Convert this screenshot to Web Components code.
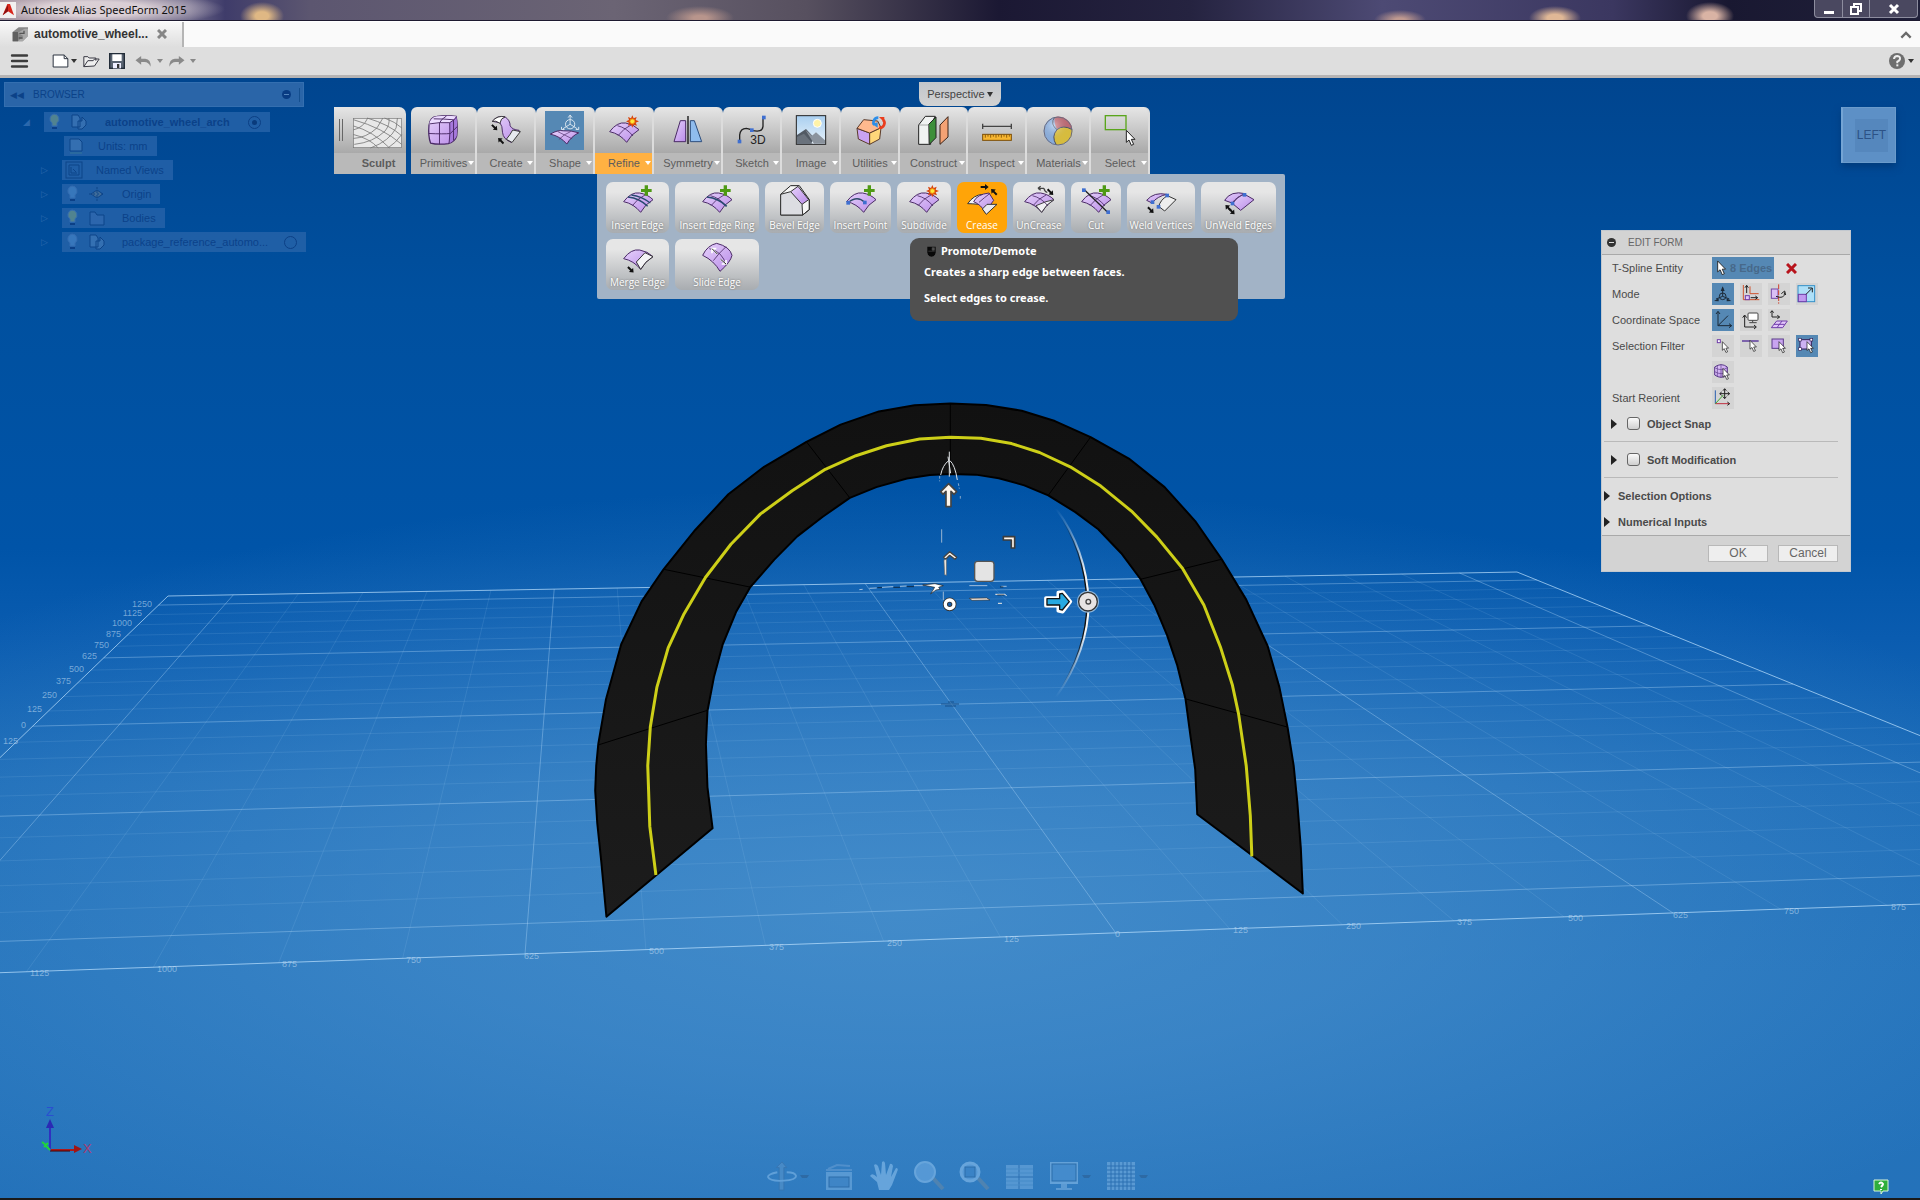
<!DOCTYPE html>
<html lang="en">
<head>
<meta charset="utf-8">
<title>Autodesk Alias SpeedForm 2015</title>
<style>
html,body{margin:0;height:100%;overflow:hidden}
body{font-family:"Liberation Sans",Arial,sans-serif;font-size:11px;line-height:16px;color:#4a4a4a}
</style>
</head>
<body>
<sf-app></sf-app>
<script>
/* ---------- icon library: 90-unit square unless a view box is given ---------- */
const P='fill="url(#pu)" stroke="#4a2a66" stroke-width="3" stroke-linejoin="round"';
const K='fill="none" stroke="#4a2a66" stroke-width="2.5"';
const surf=`<path d="M2 50Q24 20 50 24Q74 28 90 44Q66 58 53 82Q32 56 2 50Z" ${P}/>`;
const cross=`<path d="M25 32Q52 38 72 63M27 62Q44 40 66 30" ${K}/>`;
const plus='<path d="M65 1h10v11h11v9H75v11H65V21H54v-9h11z" fill="#4f9a14"/>';
const star='<path d="M70 0l4 9 9-4-3 9 10 4-10 4 4 9-10-3-4 9-4-9-9 3 3-9-9-4 9-4-3-9 9 4z" fill="#d8440c"/><circle cx="70" cy="18" r="7" fill="#ffe83a" stroke="#f59a12" stroke-width="3"/>';
const dot=(x,y)=>`<rect x="${x-6}" y="${y-6}" width="11" height="11" fill="#3f6fd0"/>`;
const arrow=(x,y,r)=>`<path transform="translate(${x} ${y}) rotate(${r})" d="M-13 -3h13v-6l11 9-11 9v-6h-13z" fill="#111"/>`;
const cursor=(x,y,s=1)=>`<path transform="translate(${x} ${y}) scale(${s})" d="M0 0v36l8-7 7 16 7-3-7-15h11z" fill="#fff" stroke="#222" stroke-width="3" stroke-linejoin="round"/>`;
const bulb=c=>`<path d="M7 2a5 5 0 0 1 3 9v3H5v-3a5 5 0 0 1 2-9z" fill="${c}" stroke="#3a70b4"/><path d="M5 16h5" stroke="#0d3f86" stroke-width="2"/>`;
const ICONS={
sculpt:['0 0 147 91','<rect x="1" y="1" width="145" height="89" fill="#e8e8e8" stroke="#777" stroke-width="2"/><path d="M0 24Q60 40 110 91M0 50Q50 62 76 91M0 5Q90 30 147 80M42 0Q110 20 147 54M95 0Q128 12 147 30M3 80Q60 74 96 40Q112 20 108 0M0 62Q40 60 72 30L90 0M0 36Q30 30 44 0M52 91Q110 70 130 30L134 0M105 91Q130 75 147 50" fill="none" stroke="#777" stroke-width="2.5"/>'],
primitives:['0 0 94 94','<path d="M3 32Q6 6 28 4Q60 0 88 4Q94 30 90 66Q84 84 64 90Q30 94 8 88Q0 66 3 32Z" fill="url(#pu)" stroke="#4a2a66" stroke-width="4"/><path d="M3 30Q8 6 28 4Q60 0 88 4Q86 12 68 24Q30 26 3 30Z" fill="#ecdcff"/><path d="M68 24Q84 14 89 5Q93 30 90 66Q80 84 66 89Z" fill="#a679dc"/><path d="M4 28Q36 22 68 24Q84 16 89 6M68 24Q70 60 66 90M36 25V92M2 58Q50 60 70 58L92 36M36 25Q40 14 58 3M18 12Q50 12 80 15V80" fill="none" stroke="#4a2a66" stroke-width="3"/>'],
create:['0 0 94 94','<path d="M4 20Q20 0 44 6Q60 16 60 34Q66 46 88 48L64 86Q38 76 36 54Q36 34 28 24Z" fill="url(#pu)" stroke="#4a2a66" stroke-width="3"/><path d="M4 20Q20 0 44 6Q30 10 28 26Q14 16 4 20Z" fill="#fff" stroke="#333" stroke-width="3"/><path d="M68 47L92 52L66 86L48 76Q60 62 68 47Z" fill="#e6e9ef" stroke="#333" stroke-width="3"/>'+arrow(12,40,45)+arrow(30,80,225)],
shape:['0 0 118 118','<rect width="118" height="118" fill="#5588b4"/><g transform="translate(12 22)"><path d="M4 48Q28 34 44 38Q66 36 90 44Q68 54 54 78Q34 54 4 48Z" fill="url(#pu)" stroke="#4a2a66" stroke-width="3"/><path d="M26 40Q50 52 70 62M30 64Q46 48 66 40" fill="none" stroke="#4a2a66" stroke-width="2"/></g><g fill="none" stroke="#d8e4ee" stroke-width="3"><circle cx="76" cy="40" r="14"/><path d="M76 40V14M70 20l6-8 6 8M76 40L54 54M76 40L98 54M50 48v8h9M93 56h9v-8"/></g>'],
refine:[,surf+cross+'<g transform="translate(0 1)">'+star+'</g>'],
symmetry:[,'<path d="M22 17H38V80H3Z" fill="url(#pu)" stroke="#4a2a66" stroke-width="3"/><path d="M52 17H64L86 80H52Z" fill="#8fbcee" stroke="#2c4d7c" stroke-width="3"/><path d="M45 3V87" stroke="#111" stroke-width="4"/>'],
sketch:[,'<path d="M8 78V60Q10 40 28 40Q38 42 45 46Q76 54 78 34V10" fill="none" stroke="#222" stroke-width="4"/>'+dot(8,80)+dot(45,46)+dot(81,8)+'<text x="40" y="88" font-family="Liberation Sans" font-size="36" fill="#222">3D</text>'],
image:[,'<rect x="1" y="2" width="88" height="86" fill="url(#sky)" stroke="#222" stroke-width="3"/><circle cx="64" cy="25" r="12" fill="#fff3a8" stroke="#fff" stroke-width="3"/><path d="M3 60L30 42L56 70L44 86H3Z" fill="#525a64"/><path d="M28 44L54 86H87V76L60 52L48 62Z" fill="#8b939d"/><path d="M3 66L24 56L50 86H3Z" fill="#6a727c"/>'],
utilities:[,'<path d="M6 40L44 54V88L10 72Z" fill="#c9a2f2" stroke="#5a3a2a" stroke-width="3"/><path d="M44 54L78 38L74 72L44 88Z" fill="#ffd77a" stroke="#5a3a2a" stroke-width="3"/><path d="M6 40L26 14L68 18L78 38L44 54Z" fill="#ffb98e" stroke="#5a3a2a" stroke-width="3"/><path d="M70 8A14 14 0 0 0 58 30" fill="none" stroke="#2d8ee8" stroke-width="8"/><path d="M50 26l18 12V22z" fill="#2d8ee8"/><path d="M72 38A14 14 0 0 0 84 14" fill="none" stroke="#ea3d1d" stroke-width="8"/><path d="M72 6h16v16z" fill="#ea3d1d"/>'],
construct:[,'<path d="M2 30L22 4H52L38 28V88H2Z" fill="#f1f3f2" stroke="#222" stroke-width="3"/><path d="M32 28L54 6V68L34 88Z" fill="#3d8f3a" stroke="#222" stroke-width="3"/><path d="M2 30H32V88" fill="none" stroke="#888" stroke-width="2"/><path d="M66 30L90 5V66L66 88Z" fill="#f4a274" stroke="#3a2216" stroke-width="3"/>'],
inspect:[,'<path d="M2 34H88M2 26V42M88 26V42" stroke="#444" stroke-width="4"/><rect x="2" y="58" width="86" height="18" fill="#f7b631" stroke="#7c4d06" stroke-width="3"/><path d="M10 59v9M18 59v6M26 59v9M34 59v6M42 59v9M50 59v6M58 59v9M66 59v6M74 59v9M82 59v6" stroke="#7c4d06" stroke-width="2.5"/>'],
materials:[,'<circle cx="45" cy="48" r="43" fill="#94bdf0"/><path d="M35 6A43 43 0 0 1 88 42Q60 28 42 42Q32 26 35 6Z" fill="#cf6f78"/><path d="M88 44A43 43 0 0 1 40 90Q24 66 42 44Q62 28 88 44Z" fill="#f0d13a"/><path d="M35 6Q20 28 42 44Q24 64 40 90M42 44Q60 28 88 44" fill="none" stroke="#4d5060" stroke-width="3"/><circle cx="45" cy="48" r="42" fill="url(#ball)" stroke="#6b6b7d" stroke-width="3"/>'],
select:[,'<rect x="1" y="2" width="62" height="42" fill="none" stroke="#5aa51c" stroke-width="4"/>'+cursor(64,46,1)],
insedge:[,surf+'<path d="M15 36Q50 40 74 64M25 30Q56 34 82 54" fill="none" stroke="#27496f" stroke-width="4"/><path d="M28 62Q44 40 66 30" '+K+'/>'+plus],
insring:[,surf+cross+'<path d="M15 36Q50 40 74 64" fill="none" stroke="#27496f" stroke-width="5"/>'+plus],
bevel:[,'<path d="M2 28L32 2H58L88 44V74L68 90H2Z" fill="#f6f6f6" stroke="#222" stroke-width="3"/><path d="M2 28L32 20L66 58L68 90H2Z" fill="#dcdde2"/><path d="M32 20L54 4L86 44L66 58Z" fill="url(#pu)" stroke="#333" stroke-width="3"/><path d="M2 28L32 20M66 58L68 90M2 28V90H68L88 74V44" fill="none" stroke="#333" stroke-width="3"/>'],
inspoint:[,surf+'<path d="M6 53Q34 30 56 52" fill="none" stroke="#2b4a66" stroke-width="4"/>'+dot(7,54)+dot(57,53)+plus],
subdivide:[,surf+cross+star],
crease:[,'<path d="M2 56Q20 30 46 28L36 58Q16 56 2 56Z" fill="#f4f4f8" stroke="#333" stroke-width="3"/><path d="M20 50Q30 28 66 24L80 46L54 82Q44 60 20 50Z" fill="url(#pu)" stroke="#4a2a66" stroke-width="3"/><path d="M60 58L90 58L58 88L46 72Z" fill="#e9e9ef" stroke="#333" stroke-width="3"/><path d="M36 52Q54 36 68 26" '+K+'/>'+arrow(54,6,0)+arrow(80,20,225)],
uncrease:[,surf+'<path d="M66 50L90 44Q66 58 53 82L36 62Z" fill="#f0f0f4" stroke="#444" stroke-width="3"/>'+cross+'<path d="M42 10h18M42 10l8-6M42 10l8 6M60 10q2 10 10 12" stroke="#444" stroke-width="4" fill="none"/>'+arrow(80,22,45)],
cut:[,surf+cross+'<path d="M10 14L80 82" stroke="#222" stroke-width="4"/>'+dot(9,16)+dot(82,82)+plus],
weldv:[,'<path d="M2 46Q24 20 62 28Q34 34 18 54Z" fill="url(#pu)" stroke="#4a2a66" stroke-width="3"/><path d="M64 32L90 44L56 78L38 64Q44 44 64 32Z" fill="#eee" stroke="#333" stroke-width="3"/>'+dot(64,32)+dot(20,52)+dot(38,66)+arrow(15,76,45)],
unweld:[,'<path d="M2 46Q20 16 64 26Q40 34 24 54Z" fill="url(#pu)" stroke="#4a2a66" stroke-width="3"/><path d="M62 28L90 44L50 76L26 56Q40 34 62 28Z" fill="url(#pu)" stroke="#4a2a66" stroke-width="3"/>'+dot(62,30)+dot(26,56)+arrow(24,80,45)+arrow(12,68,225)],
merge:[,surf+'<path d="M66 32L90 44Q66 58 53 82L40 60Z" fill="#f4f4f6" stroke="#333" stroke-width="3"/>'+arrow(24,84,45)],
slide:[,'<path d="M2 40Q16 10 44 4Q84 14 90 40Q86 60 54 88Q36 56 2 40Z" '+P+'/><path d="M22 20Q62 28 72 70M34 56Q50 34 72 14" '+K+'/><path d="M30 20l16 16M30 34V20h13M56 52l16 14M72 54v12H59" stroke="#fff" stroke-width="5" fill="none"/><path d="M30 20l16 16M56 52l16 14" stroke="#222" stroke-width="3" fill="none"/>'],
/* edit form icons, 66 units */
manip:['0 0 66 66','<g fill="none" stroke="#1c2a38" stroke-width="3"><circle cx="32" cy="40" r="10"/><path d="M32 40V14M32 40L12 48M32 40L52 48"/></g><path d="M32 10l6 14H26zM6 54l14-8v9zM58 54l-14-8v9z" fill="#1c2a38"/>'],
translate:['0 0 66 66','<path d="M10 6V50H58M30 10V32H56" stroke="#d0532e" stroke-width="3" fill="none"/><rect x="16" y="38" width="12" height="12" fill="#e3c8fb" stroke="#6f3ca8" stroke-width="3"/><path d="M20 30V8M15 14l5-7 5 7M32 44H52M46 39l7 5-7 5" stroke="#222" stroke-width="3" fill="none"/>'],
rotate:['0 0 66 66','<rect x="10" y="18" width="20" height="28" fill="#d9bff5" stroke="#7448a8" stroke-width="3"/><path d="M32 4V62" stroke="#d0432e" stroke-width="3" stroke-dasharray="14 4"/><path d="M24 40Q50 50 50 28M40 32l10-8 3 12" fill="none" stroke="#222" stroke-width="3"/>'],
scale:['0 0 66 66','<rect x="6" y="8" width="50" height="48" fill="#aee0f8" stroke="#3490c8" stroke-width="3"/><rect x="7" y="34" width="24" height="22" fill="#c09af0" stroke="#6f3ca8" stroke-width="3"/><path d="M30 34L48 16M36 15h13v13" fill="none" stroke="#222" stroke-width="3"/>'],
world:['0 0 66 66','<path d="M18 8V50H58M18 50L48 20M12 15l6-8 6 8M51 44l8 6-8 6" fill="none" stroke="#1c2a38" stroke-width="3"/>'],
view:['0 0 66 66','<path d="M14 20V54H48M8 26l6-8 6 8M42 48l7 6-7 6" fill="none" stroke="#222" stroke-width="3"/><rect x="24" y="12" width="30" height="22" rx="3" fill="#fff" stroke="#444" stroke-width="3"/><path d="M38 34v6M28 41h22" stroke="#444" stroke-width="3"/>'],
local:['0 0 66 66','<path d="M12 6V24H34M7 11l5-6 5 6M28 19l7 5-7 5" fill="none" stroke="#222" stroke-width="3"/><path d="M26 36H58L44 56H10ZM18 46H50M42 36L27 56" fill="#e3c8fb" stroke="#6f3ca8" stroke-width="3"/>'],
fvert:['0 0 66 66','<rect x="16" y="14" width="9" height="9" fill="#fff" stroke="#6f3ca8" stroke-width="3"/>'+cursor(31,20,.72)],
fedge:['0 0 66 66','<path d="M6 18H56" stroke="#4f2a96" stroke-width="4"/>'+cursor(30,16,.74)],
fface:['0 0 66 66','<rect x="12" y="12" width="34" height="28" fill="#c9a4f0" stroke="#5a3a8a" stroke-width="3"/>'+cursor(33,20,.74)],
fall:['0 0 66 66','<rect x="12" y="14" width="34" height="28" fill="#cdb2f2" stroke="#342058" stroke-width="3"/><g fill="#fff" stroke="#342058" stroke-width="2"><rect x="8" y="10" width="8" height="8"/><rect x="42" y="10" width="8" height="8"/><rect x="8" y="38" width="8" height="8"/></g>'+cursor(33,20,.74)],
fbody:['0 0 66 66','<path d="M8 18Q28 4 46 18V42Q28 56 8 42Z" fill="url(#pu)" stroke="#5a3a8a" stroke-width="3"/><path d="M8 20Q28 32 46 20M8 32Q28 44 46 32M27 10V50M16 12v34" fill="none" stroke="#5a3a8a" stroke-width="2"/>'+cursor(33,22,.74)],
reorient:['0 0 66 66','<path d="M10 10V50" stroke="#2a5fb0" stroke-width="3"/><path d="M10 50H52" stroke="#c03040" stroke-width="3"/><path d="M10 50L34 24" stroke="#3fa82c" stroke-width="3"/><path d="M38 6V34M24 20H52M33 11l5-6 5 6M33 29l5 6 5-6M29 15l-6 5 6 5M47 15l6 5-6 5M46 45l7 5-7 5" fill="none" stroke="#222" stroke-width="3"/>'],
cursor:['0 0 40 50',cursor(8,3,.95)],
/* file bar */
adsk:['0 0 48 48','<rect width="48" height="48" fill="#f2f0f0"/><path d="M22 6h8l12 34-18-12-16 12z" fill="#d8261c"/><path d="M24 8L8 40l16-12z" fill="#8e1010"/>'],
cube:['0 0 48 48','<path d="M2 18L20 4H48V30L32 46H2Z" fill="#888"/><path d="M2 18H18V46H2Z" fill="#606060"/><path d="M18 20L38 8H48V30L32 46H18L34 30Z" fill="#a8a8a8"/><path d="M22 22h14v-8M20 36h12" stroke="#555" stroke-width="4" fill="none"/>'],
menu:['0 0 50 40','<path d="M3 4H47M3 20H47M3 36H47" stroke="#3c3c3c" stroke-width="7" stroke-linecap="round"/>'],
newf:['0 0 50 42','<path d="M3 3H36L47 14V39H3Z" fill="#fff" stroke="#2c3440" stroke-width="3"/><path d="M36 3V14H47" fill="none" stroke="#2c3440" stroke-width="3"/>'],
open:['0 0 50 42','<path d="M2 38V8H14L18 12H38V20M2 38L14 20H30L34 15H48L34 36Z" fill="#eee" stroke="#3a3a44" stroke-width="3"/>'],
save:['0 0 48 48','<rect x="2" y="2" width="44" height="44" fill="#5a6472" stroke="#222c38" stroke-width="4"/><rect x="10" y="4" width="28" height="20" fill="#fff"/><rect x="12" y="30" width="24" height="16" fill="#eef"/><rect x="24" y="33" width="7" height="12" fill="#333"/>'],
undo:['0 0 50 42','<path d="M1 19L18 6V14H30Q48 16 46 38Q40 24 28 24H18V32Z" fill="#8a8a8a"/>'],
redo:['0 0 50 42','<path d="M49 19L32 6V14H20Q2 16 4 38Q10 24 22 24H32V32Z" fill="#8a8a8a"/>'],
help:['0 0 48 48','<circle cx="24" cy="24" r="24" fill="#6e6e6e"/><path d="M15 18Q16 9 25 9Q34 10 33 18Q32 23 25 26V31" fill="none" stroke="#eee" stroke-width="6"/><rect x="22" y="34" width="6" height="6" fill="#eee"/>'],
up:['0 0 36 24','<path d="M4 20L18 6L32 20" fill="none" stroke="#6a6a6a" stroke-width="7"/>'],
/* browser tree */
bulbOn:['0 0 15 20',bulb('#5a8a90')],bulbOff:['0 0 15 20',bulb('#3d7cc0')],
comp:['0 0 18 18','<path d="M2 2H8L10 5V14H2Z M8 8H12V4L16 8V12L12 16H8Z" fill="#3a74b5" stroke="#0f4488"/>'],
units:['0 0 18 18','<path d="M3 2H12L15 5V14H3Z" fill="#3a74b5" stroke="#0f4488"/><path d="M3 16H15" stroke="#3b7a9a"/>'],
views:['0 0 18 18','<rect x="1" y="1" width="16" height="16" fill="none" stroke="#0f4488"/><path d="M4 4H14V14H4ZM6 6V12H12M8 8l3 3" fill="none" stroke="#0f4488"/>'],
origin:['0 0 18 18','<path d="M3 9L9 5L15 9L9 13Z" fill="#46709a" stroke="#0f4488"/><path d="M9 2V16M1 9H17" stroke="#0f4488" stroke-dasharray="2 2"/>'],
folder:['0 0 18 18','<path d="M2 3H7L9 6H16V16H2Z" fill="#3169b0" stroke="#0f4488"/>'],
/* navigation bar */
orbit:['0 0 32 32','<path d="M16 1l5 6h-3v24h-5V7h-3z" fill="#4f8fc9" stroke="#3a74ae"/><path d="M11 12Q1 14 1 17Q3 22 18 21Q31 20 31 16Q30 12 21 12" fill="none" stroke="#6fabe0" stroke-width="2"/>'],
look:['0 0 30 32','<path d="M4 9L13 5L26 6" fill="none" stroke="#5a95cf" stroke-width="2"/><rect x="2" y="12" width="26" height="18" fill="#66a3da"/><rect x="5" y="17" width="20" height="10" fill="#4488c8" stroke="#2a68a4"/><path d="M2 10H28" stroke="#5a95cf" stroke-width="2"/>'],
pan:['0 0 30 32','<path d="M10 30L8 22L1 16Q3 12 8 17L5 5Q7 3 9 6L12 15L13 2Q15 0 16 3L17 15L21 4Q23 3 24 6L22 17L27 8Q30 8 28 12L23 25L20 30Z" fill="#78b2e4"/>'],
zoom:['0 0 30 32','<path d="M19 18L29 29" stroke="#5a86ac" stroke-width="4"/><circle cx="11" cy="12" r="10" fill="#62a2dc" stroke="#79b2e4" stroke-width="2"/>'],
fit:['0 0 30 32','<path d="M19 18L29 29" stroke="#5a86ac" stroke-width="4"/><circle cx="11" cy="12" r="9" fill="#62a2dc" stroke="#79b2e4" stroke-width="3"/><rect x="6" y="7" width="10" height="10" fill="#3e86c8" stroke="#2a68a4"/>'],
layout:['0 0 30 32','<rect x="2" y="5" width="27" height="24" fill="#62a0d8"/><path d="M2 17H29M15 5V29" stroke="#2a6cae"/><path d="M2 9H29M2 13H29M2 21H29M2 25H29" stroke="#4d90cc"/>'],
display:['0 0 30 32','<rect x="1" y="2" width="28" height="22" fill="#74aee0"/><rect x="3" y="4" width="24" height="17" fill="#4b90d0" stroke="#2a68a4"/><path d="M12 24h6v4h5v2H7v-2h5z" fill="#6aa5da"/>'],
grid:['0 0 30 32','<rect x="1" y="2" width="28" height="28" fill="#68a4da"/><path d="M5 2V30M9 2V30M13 2V30M17 2V30M21 2V30M25 2V30M1 6H29M1 10H29M1 14H29M1 18H29M1 22H29M1 26H29" stroke="#2a6cae"/>'],
mouse:['0 0 28 34','<path d="M1 2H27V20Q25 33 14 33Q3 33 1 20Z" fill="#080808"/><path d="M16 5h7v8h-7zM4 16h20" fill="#505050" stroke="#505050" stroke-width="2"/>'],
chat:['0 0 16 16','<path d="M1 1H15V12H10L8 15V12H1Z" fill="#2fae3c" stroke="#d8f5d8"/><path d="M6 5Q8 2 10 5Q10 6 8 8M8 10v1" stroke="#fff" stroke-width="2" fill="none"/>']
};
const DEFS='<defs><linearGradient id="pu" x1="0" y1="0" x2="1" y2="1"><stop offset="0" stop-color="#e6d2fb"/><stop offset="1" stop-color="#b98be8"/></linearGradient><linearGradient id="sky" x1="0" y1="0" x2="0" y2="1"><stop offset="0" stop-color="#a9cff0"/><stop offset="1" stop-color="#e8f2fa"/></linearGradient><radialGradient id="ball" cx=".35" cy=".3"><stop offset="0" stop-color="#fff" stop-opacity=".4"/><stop offset="1" stop-color="#445" stop-opacity=".15"/></radialGradient></defs>';

class Base extends HTMLElement{
  constructor(){super();this.attachShadow({mode:'open'});}
  connectedCallback(){
    this.shadowRoot.innerHTML='<style>*{box-sizing:border-box}button{font:inherit;color:inherit;border:0;margin:0;padding:0;background:none;text-align:center}'+this.css()+'</style>'+this.html();
  }
}
const def=(tag,css,html)=>customElements.define(tag,class extends Base{css(){return css}html(){return typeof html==='function'?html(this):html}});
const icon=(n,w,h=w)=>`<sf-icon name="${n}" style="width:${w}px;height:${h}px"></sf-icon>`;

def('sf-icon',':host{display:block;flex:none}svg{display:block;width:100%;height:100%;overflow:visible}',
  e=>{const [vb,body]=ICONS[e.getAttribute('name')];return `<svg viewBox="${vb||'0 0 90 90'}" aria-hidden="true">${DEFS}${body}</svg>`});

def('sf-titlebar',`:host{display:flex;align-items:center;height:21px;flex:none;color:#101010;font:11px/16px "Noto Sans","Open Sans",sans-serif;border-bottom:1px solid #1d1a30;
 background:radial-gradient(ellipse 130px 18px at 95px 9px,#e8dde0dd 40%,#e8dde000 100%),radial-gradient(ellipse 22px 14px at 262px 16px,#dfb884 30%,#dfb88400),radial-gradient(ellipse 24px 14px at 1710px 16px,#d9b3a4 30%,#d9b3a400),radial-gradient(ellipse 26px 12px at 1555px 18px,#e0b896 30%,#e0b89600),radial-gradient(ellipse 26px 10px at 1400px 20px,#c09a90 20%,#c09a9000),radial-gradient(ellipse 34px 12px at 700px 18px,#b8958c 20%,#b8958c00),
 linear-gradient(90deg,#9b8794 0,#6b6688 190px,#3f3c6a 225px,#5c5670 310px,#6b6474 32%,#57505f 42%,#1b1833 52%,#252340 62%,#4d4a74 72%,#3b3760 84%,#191831 90%,#20203a 100%)}
 sf-icon{margin-right:5px}h1{font:inherit;margin:0;flex:1}
 .w{display:flex;align-self:flex-start;height:18px;margin-right:2px;border:1px solid #8d8d9f;border-top:0;border-radius:0 0 4px 4px;background:#4a4860}
 .w button{width:27px;display:grid;place-items:center}.w button+button{border-left:1px solid #8d8d9f}.w button:last-child{width:48px}svg{display:block}`,
 icon('adsk',16)+`<h1>Autodesk Alias SpeedForm 2015</h1><div class="w"><button aria-label="Minimize"><svg width="12" height="12"><rect x="1" y="8" width="10" height="3" fill="#fff"/></svg></button><button aria-label="Restore"><svg width="12" height="12" fill="none" stroke="#fff" stroke-width="2"><path d="M4 4V1H11V8H8"/><rect x="1" y="4" width="7" height="7"/></svg></button><button aria-label="Close"><svg width="12" height="12" stroke="#fff" stroke-width="3"><path d="M2 2L10 10M10 2L2 10"/></svg></button></div>`);

def('sf-tabs',`:host{display:flex;align-items:center;height:26px;flex:none;background:#fafafa;border-top:1px solid #fff}
 .t{display:flex;align-items:center;gap:6px;height:100%;padding:0 0 2px 12px;width:184px;border-right:2px solid #b5b5b5;background:linear-gradient(#f8f8f8,#dedede);font-weight:bold;font-size:12px;color:#333}
 .x{margin-left:3px}.up{margin-left:auto;margin-right:8px}svg{display:block}`,
 `<div class="t">${icon('cube',16)}<span>automotive_wheel...</span><button class="x" aria-label="Close tab"><svg width="10" height="10" stroke="#868686" stroke-width="3"><path d="M1 1L9 9M9 1L1 9"/></svg></button></div><button class="up" aria-label="Collapse">${icon('up',12,8)}</button>`);

def('sf-filebar',`:host{display:flex;align-items:center;height:31px;flex:none;background:#dedede;border-bottom:3px solid #b6b4b4;padding:0 6px 0 11px}
 button{display:flex;align-items:center;gap:2px}.m{margin-right:24px}.a::after{content:"";border:3px solid transparent;border-top:4px solid #333;border-bottom:0}.g::after{border-top-color:#888}
 .n{margin-right:6px}.o{margin-right:9px}.s{margin-right:10px}.u{margin-right:5px}.u,.r{gap:5px}.h{margin-left:auto;gap:3px}`,
 `<button class="m" aria-label="Menu">${icon('menu',17,14)}</button><button class="a n" aria-label="New">${icon('newf',17,14)}</button><button class="o" aria-label="Open">${icon('open',17,14)}</button><button class="s" aria-label="Save">${icon('save',16)}</button><button class="a g u" aria-label="Undo">${icon('undo',17,14)}</button><button class="a g r" aria-label="Redo">${icon('redo',17,14)}</button><button class="a h" aria-label="Help">${icon('help',16)}</button>`);

/* ---------- 3D scene ---------- */
function planeMap(src,dst){
  const A=[];
  src.forEach(([x,y],i)=>{const [u,v]=dst[i];A.push([x,y,1,0,0,0,-u*x,-u*y,u],[0,0,0,x,y,1,-v*x,-v*y,v]);});
  for(let c=0;c<8;c++){let p=c;for(let r=c+1;r<8;r++)if(Math.abs(A[r][c])>Math.abs(A[p][c]))p=r;[A[c],A[p]]=[A[p],A[c]];
    for(let r=0;r<8;r++)if(r!==c){const f=A[r][c]/A[c][c];for(let k=c;k<9;k++)A[r][k]-=f*A[c][k];}}
  const h=A.map((r,i)=>r[8]/r[i]);
  return(x,y)=>{const w=h[6]*x+h[7]*y+1;return[(h[0]*x+h[1]*y+h[2])/w,(h[3]*x+h[4]*y+h[5])/w]};
}
function ground(){
  const map=planeMap([[-11,11],[11,11],[-5,-11],[5,-11]],[[168,596],[1517,572],[525,954],[1673,913]]);
  let out='';
  const seg=(a,b,k)=>{const [p,q]=[map(...a),map(...b)];const o=Math.abs(k)===11?.7:k%5===0?.34:.11;
    out+=`<path d="M${p[0].toFixed(1)} ${p[1].toFixed(1)}L${q[0].toFixed(1)} ${q[1].toFixed(1)}" stroke="#bfe2ff" stroke-opacity="${o}"/>`};
  for(let k=-11;k<=11;k++){seg([k,-11],[k,11],k);seg([-11,k],[11,k],k);}
  for(let k=-9;k<=7;k++){const [x,y]=map(k,-11);out+=`<text x="${(x|0)+(k%5?4:0)}" y="${(y|0)+5}">${Math.abs(k*125)}</text>`;}
  for(let k=-1;k<=10;k++){const [x,y]=map(-11,k);out+=`<text x="${Math.max((x|0)-6,18)}" y="${(y|0)+2}" text-anchor="end">${Math.abs(k*125)}</text>`;}
  return out;
}
def('sf-scene',`:host{display:block;background:
 radial-gradient(ellipse 1250px 420px at 47% 74%,#5096d0b8 0,#4d93cf88 40%,#4d93cf00 100%),
 linear-gradient(#00458f 0,#00509f 20%,#0054a8 42%,#0a5cb0 50%,#1c6cb8 63%,#2272bb 80%,#2472ba 100%)}
 svg{display:block;width:100%;height:100%}text{font-family:"Liberation Sans",Arial,sans-serif;font-size:9px;fill:#bcd9f2;fill-opacity:.6}.ax{font-size:13px;fill-opacity:1}`,
 ()=>`<svg viewBox="0 78 1920 1120" preserveAspectRatio="xMidYMid slice" aria-label="Model view">
 <defs><linearGradient id="arc" x1="0" y1="0" x2="0" y2="1"><stop offset="0" stop-color="#cfe3f5" stop-opacity="0"/><stop offset=".35" stop-color="#f4f4f4"/><stop offset=".65" stop-color="#f4f4f4"/><stop offset="1" stop-color="#cfe3f5" stop-opacity="0"/></linearGradient>
 <linearGradient id="ard" x1="0" y1="0" x2="0" y2="1"><stop offset=".05" stop-color="#111" stop-opacity="0"/><stop offset=".35" stop-color="#111"/><stop offset=".65" stop-color="#111"/><stop offset=".95" stop-color="#111" stop-opacity="0"/></linearGradient>
 <linearGradient id="body" x1="0" y1="0" x2="0" y2="1"><stop offset="0" stop-color="#111"/><stop offset="1" stop-color="#1c1c1c"/></linearGradient></defs>
 ${ground()}
 <g stroke="#17508c" stroke-width="1"><path d="M941 704H959M945 706H956M948 702H954" fill="none"/></g>
 <g transform="translate(560 380) scale(.5102 .3571)" stroke-linejoin="round">
 <path vector-effect="non-scaling-stroke" fill="url(#body)" stroke="#000" stroke-width="2" d="M91 1503L81 1350L73 1240L69 1150L71 1080L75 1020L90 895L120 740L160 620L203 530L265 420L330 320L400 243L483 173L550 125L625 88L695 71L765 66L835 70L905 86L970 115L1040 160L1115 220L1185 300L1245 395L1297 502L1345 615L1387 745L1410 860L1426 972L1438 1080L1445 1180L1452 1310L1456 1438L1249 1216L1245 1090L1236 1000L1226 893L1210 800L1190 715L1165 630L1138 558L1100 485L1055 418L1010 370L957 323L910 295L860 275L815 265L765 263L725 266L680 276L620 300L568 330L515 383L465 438L420 503L373 580L345 650L319 740L302 830L289 927L286 1020L289 1140L299 1255Z"/>
 <path vector-effect="non-scaling-stroke" fill="none" stroke="#000" d="M75 1022L289 925M203 530L373 580M483 173L568 330M765 66V264M1040 160L957 323M1297 502L1138 558M1426 972L1226 893"/>
 <path vector-effect="non-scaling-stroke" fill="none" stroke="#cdcf18" stroke-width="3" d="M188 1386L176 1250L172 1080L177 972L190 860L212 750L243 655L285 553L335 460L393 375L455 310L520 250L580 212L640 184L705 165L765 160L825 163L885 178L940 203L1000 243L1060 297L1120 367L1170 440L1220 527L1262 630L1295 750L1318 855L1330 935L1345 1080L1353 1220L1356 1334"/>
 </g>
 <g transform="translate(840 420) scale(.3333)" stroke-linejoin="round">
 <path d="M645 265Q735 390 741 545Q742 690 645 835" fill="none" stroke="url(#ard)" stroke-width="5"/><path d="M648 265Q740 390 746 545Q747 690 648 832" fill="none" stroke="url(#arc)" stroke-width="6"/>
 <g fill="none" stroke="#dfe3e6" stroke-width="3"><path d="M328 95V170M324 110L332 160M326 122Q308 135 302 165M330 122Q345 135 352 180" /><path d="M299 168V184M355 190L358 206M361 228V238" stroke-dasharray="8 5" stroke-opacity=".6"/><path d="M305 328V368M310 515V540" stroke-width="2"/></g>
 <path d="M326 191L350 215L342 223L333 214V260H318V214L309 223L302 215Z" fill="#fff6ec" stroke="#444" stroke-width="5"/>
 <path d="M490 350H524V384H514V360H490Z" fill="#fff6ec" stroke="#3d3d3d" stroke-width="5"/>
 <path d="M329 395L350 412L345 418L329 406L317 418L311 412Z" fill="#fff6ec" stroke="#444" stroke-width="4"/><path d="M312 420L319 418V466L314 464Z" fill="#fff6ec" stroke="#666" stroke-width="2"/>
 <rect x="404" y="424" width="58" height="60" rx="9" fill="#e4e4e4" stroke="#555" stroke-width="4"/>
 <path d="M58 509L68 508M88 505L110 504M126 502L160 500M180 499L200 498M222 497H250M388 497H442M484 499H500" stroke="#e8edf2" stroke-width="2"/><path d="M112 503H126M160 502H180M200 500H222M480 501H490" stroke="#111" stroke-width="2"/>
 <path d="M248 495L285 491L310 497L296 502L300 508L288 510L272 522L284 502Z" fill="#fff" stroke="#222" stroke-width="2"/>
 <path d="M388 535L440 534L450 540L396 541Z" fill="#fff3e8" stroke="#333" stroke-width="2"/><path d="M466 523H494L500 527M474 550H486" fill="none" stroke="#f5efe8" stroke-width="3"/><path d="M472 525H492" stroke="#222" stroke-width="2"/>
 <circle cx="329" cy="553" r="13" fill="#165ba5" stroke="#333" stroke-width="15"/><circle cx="329" cy="553" r="13" fill="none" stroke="#fff" stroke-width="10"/>
 <path d="M618 534H655V518L668 516L691 545L668 575L655 572V557H618Z" fill="#fff" stroke="#fff" stroke-width="11"/><path d="M621 536H659V522L667 520L688 545L667 570L659 568V555H621Z" fill="#27a9e1" stroke="#111" stroke-width="4"/>
 <circle cx="744" cy="545" r="33" fill="#8fb8dd"/><circle cx="744" cy="545" r="28" fill="#e6e3e3" stroke="#333" stroke-width="4"/><circle cx="745" cy="545" r="7" fill="none" stroke="#444" stroke-width="4"/>
 </g>
 <g fill="none" stroke-width="2"><path d="M50 1150V1124" stroke="#3030c0"/><path d="M51 1150H74" stroke="#b01818"/><path d="M50 1151H70" stroke="#400" stroke-width="1"/><path d="M50 1150L45 1145M42 1142l4 3M44 1147l4-4" stroke="#1fd63a"/></g><path d="M50 1119l4 9H46z" fill="#2a2ab4"/><path d="M82 1149l-8-4v8z" fill="#a01414"/>
 <text class="ax" x="46" y="1116" style="fill:#2a4fd0">Z</text><text class="ax" x="83" y="1153" style="fill:#a83a70">X</text>
 </svg>`);

/* ---------- browser tree ---------- */
def('sf-browser',`:host{display:block;color:#0d4288;opacity:.9}
 header{display:flex;align-items:center;height:25px;width:300px;padding:0 2px 0 5px;background:#2f69ab;border:1px solid #3a74b4;font-size:10px}h2{font:inherit;margin:0 0 0 9px;flex:1}
 header button{font-size:9px}
 .r{width:9px;height:9px;border-radius:50%;background:#0a3c82;margin-right:8px}.r::after{content:"";display:block;width:5px;height:1px;background:#5d8dc2;margin:0 2px}.b{width:2px;height:14px;border-left:1px solid #17508f}
 ul{list-style:none;margin:5px 0 0;padding:0;display:flex;flex-direction:column;gap:4px}li{display:flex;height:20px;align-items:center}
 .tw{width:12px;margin-left:34px;margin-right:12px;color:#2f6cb0;font-size:9px}li:first-child .tw{margin-left:16px}
 .i{display:flex;align-items:center;height:20px;background:#2361a8;padding:0 9px 0 3px}.i span{margin-left:13px}b{margin:0 18px 0 17px}.i sf-icon+sf-icon+span{margin-left:16px}
 .u{margin-left:2px}.radio{width:13px;height:13px;border:1px solid #0d3f84;border-radius:50%;display:grid;place-items:center;margin-left:16px}.on{margin-left:0}.on::after{content:"";width:5px;height:5px;border-radius:50%;background:#0a3a7a}
 sf-icon+sf-icon{margin-left:8px}`,
 ()=>{const row=(ic,t,x='')=>`<li><button class="tw" aria-label="Expand ${t}">▷</button><div class="i">${ic}<span>${t}</span>${x}</div></li>`;
 return `<header><button aria-label="Collapse browser">◀◀</button><h2>BROWSER</h2><button class="r" aria-label="Hide"></button><i class="b"></i></header><ul>
 <li><button class="tw" aria-label="Collapse document">◢</button><div class="i">${icon('bulbOn',15,20)}${icon('comp',18)}<b>automotive_wheel_arch</b><button class="radio on" aria-label="Active"></button></div></li>
 <li><span class="tw"></span><div class="i u">${icon('units',18)}<span>Units: mm</span></div></li>
 ${row(icon('views',18),'Named Views')}${row(icon('bulbOff',15,20)+icon('origin',18),'Origin')}${row(icon('bulbOn',15,20)+icon('folder',18),'Bodies')}${row(icon('bulbOff',15,20)+icon('comp',18),'package_reference_automo...','<button class="radio" aria-label="Activate"></button>')}</ul>`});

/* ---------- ribbon ---------- */
def('sf-ribbon-tab',`:host{display:block;width:59px;height:67px}
 button{display:flex;flex-direction:column;width:100%;height:100%;border-radius:6px 6px 0 0;overflow:hidden;background:linear-gradient(#e6e6e6,#a9a9a9 46px,#b9b9b9 46px);border-right:2px solid #dcdcdc;color:#5c5c5c}
 .i{height:46px;width:100%;display:grid;place-items:center}.l{height:21px;width:100%;display:flex;align-items:center;justify-content:center;padding:0 1px 2px 2px;position:relative}
 .l::after{content:"";position:absolute;right:1px;top:8px;border:3px solid transparent;border-top:4px solid #fff;border-bottom:0}
 :host([active]) .l{background:#ffb142}`,
 e=>`<button><span class="i">${icon(e.getAttribute('icon'),e.hasAttribute('large')?39:30)}</span><span class="l"><slot></slot></span></button>`);

def('sf-tool',`:host{display:block;height:51px}
 button{width:100%;height:100%;border-radius:7px;background:linear-gradient(#e6e6e6 20%,#a8acb0);display:flex;flex-direction:column;align-items:center;padding-top:3px;gap:3px;color:#fff;font:10px/14px "Open Sans","Noto Sans",sans-serif;text-shadow:0 0 2px #666;white-space:nowrap}
 :host([active]) button{background:#ffa408;text-shadow:none}`,
 e=>`<button>${icon(e.getAttribute('icon'),30)}<span><slot></slot></span></button>`);

def('sf-tooltip',`:host{display:block;width:328px;height:83px;padding:5px 14px;border-radius:9px;background:#505050;color:#fff;font:bold 11px/16px "Noto Sans","Open Sans",sans-serif}
 p{margin:0 0 5px;display:flex;align-items:center;gap:5px}p+p{margin-bottom:10px}sf-icon{margin-left:3px}`,
 `<p>${icon('mouse',9,11)}<span>Promote/Demote</span></p><p>Creates a sharp edge between faces.</p><p>Select edges to crease.</p>`);

def('sf-ribbon',`:host{display:block}
 .bar{display:flex}.sc{width:72px;height:67px;margin-right:5px;border-radius:0 7px 0 0;background:linear-gradient(#e6e6e6,#a9a9a9 46px,#b9b9b9 46px);display:grid;grid-template:46px 21px/7px 49px;column-gap:7px;padding-left:5px;align-items:center;font-weight:bold;color:#5c5c5c}
 .grip{width:4px;height:22px;border:1px solid #666;border-width:0 1px}.sc sf-icon{margin-top:6px}.sc span:last-child{grid-column:1/3;padding:0 0 2px 16px}
 .tools{position:relative;display:grid;grid-template-columns:63px 84px 59px 61px 54px 50px 52px 50px 68px 75px;gap:6px;width:688px;height:125px;margin-left:263px;padding:8px 9px;align-content:start;background:#a2b3c6;border-radius:0 2px 2px 2px}
 sf-tooltip{position:absolute;left:313px;top:64px}`,
 `<div class="bar" role="toolbar"><button class="sc"><span class="grip"></span>${icon('sculpt',49,30)}<span>Sculpt</span></button>
 <sf-ribbon-tab icon="primitives" style="width:66px">Primitives</sf-ribbon-tab><sf-ribbon-tab icon="create">Create</sf-ribbon-tab><sf-ribbon-tab icon="shape" large>Shape</sf-ribbon-tab><sf-ribbon-tab icon="refine" active>Refine</sf-ribbon-tab><sf-ribbon-tab icon="symmetry" style="width:69px">Symmetry</sf-ribbon-tab><sf-ribbon-tab icon="sketch">Sketch</sf-ribbon-tab><sf-ribbon-tab icon="image">Image</sf-ribbon-tab><sf-ribbon-tab icon="utilities">Utilities</sf-ribbon-tab><sf-ribbon-tab icon="construct" style="width:68px">Construct</sf-ribbon-tab><sf-ribbon-tab icon="inspect">Inspect</sf-ribbon-tab><sf-ribbon-tab icon="materials" style="width:64px">Materials</sf-ribbon-tab><sf-ribbon-tab icon="select">Select</sf-ribbon-tab></div>
 <div class="tools"><sf-tool icon="insedge">Insert Edge</sf-tool><sf-tool icon="insring">Insert Edge Ring</sf-tool><sf-tool icon="bevel">Bevel Edge</sf-tool><sf-tool icon="inspoint">Insert Point</sf-tool><sf-tool icon="subdivide">Subdivide</sf-tool><sf-tool icon="crease" active>Crease</sf-tool><sf-tool icon="uncrease">UnCrease</sf-tool><sf-tool icon="cut">Cut</sf-tool><sf-tool icon="weldv">Weld Vertices</sf-tool><sf-tool icon="unweld">UnWeld Edges</sf-tool><sf-tool icon="merge">Merge Edge</sf-tool><sf-tool icon="slide">Slide Edge</sf-tool><sf-tooltip role="tooltip"></sf-tooltip></div>`);

/* ---------- edit form ---------- */
def('sf-edit-form',`:host{display:block;width:250px;background:#dedede;border:1px solid #c2c8cf}
 header{display:flex;align-items:center;gap:12px;height:24px;padding-left:5px;background:#d3d3d3;border-bottom:1px solid #a9a9a9;font-size:10px;color:#666}h2{font:inherit;margin:0}
 .m{width:9px;height:9px;border-radius:50%;background:#333;display:grid;place-items:center}.m::after{content:"";width:5px;height:1px;background:#ddd}
 .row{display:flex;min-height:26px;padding:0 0 0 10px;align-items:flex-start}.row>span{width:100px;line-height:26px}.v{display:flex;flex-wrap:wrap;column-gap:6px;row-gap:4px;padding:2px 0;width:112px}
 .v button{width:22px;height:22px;background:#d4d4d4}.v .on{background:#5588b4}
 .v .sel{width:62px;display:flex;align-items:center;gap:2px;font-weight:bold;color:#47698a;background:#5588b4;padding-left:3px;white-space:nowrap}.v .del{background:none;display:grid;place-items:center}
 .g{display:flex;align-items:center;height:26px;font-weight:bold;gap:10px;padding-left:9px}.g button{border:6px solid transparent;border-width:5px 0 5px 6px;border-left-color:#222}
 .g input{appearance:none;width:13px;height:13px;margin:0;border:1px solid #666;border-radius:3px;background:linear-gradient(#fafafa,#cfcfcf)}.g label{margin-left:-3px}.c label{margin:0}
 .s{padding-bottom:5px;margin-bottom:5px;height:31px;width:234px;border-bottom:1px solid #b9b9b9;margin-left:2px;padding-left:7px}.c{padding-left:2px;gap:8px}
 footer{display:flex;justify-content:flex-end;align-items:center;gap:10px;height:36px;padding-right:12px;background:#d3d3d3;border-top:1px solid #a9a9a9;font-size:12px;color:#666}
 footer button{width:60px;height:17px;background:#eee;border:1px solid #b8b8b8;line-height:15px}`,
 ()=>{const b=(n,l,c='')=>`<button class="${c}" aria-label="${l}">${icon(n,22)}</button>`;
 return `<header><button class="m" aria-label="Collapse"></button><h2>EDIT FORM</h2></header>
 <div class="row"><span>T-Spline Entity</span><div class="v"><button class="sel">${icon('cursor',13,16)}8 Edges</button><button class="del" aria-label="Clear selection"><svg width="11" height="11" stroke="#b8141c" stroke-width="3"><path d="M1 1L10 10M10 1L1 10"/></svg></button></div></div>
 <div class="row"><span>Mode</span><div class="v">${b('manip','All','on')+b('translate','Translate')+b('rotate','Rotate')+b('scale','Scale')}</div></div>
 <div class="row"><span>Coordinate Space</span><div class="v">${b('world','World','on')+b('view','View')+b('local','Local')}</div></div>
 <div class="row"><span>Selection Filter</span><div class="v">${b('fvert','Vertex')+b('fedge','Edge')+b('fface','Face')+b('fall','All','on')+b('fbody','Body')}</div></div>
 <div class="row"><span>Start Reorient</span><div class="v">${b('reorient','Reorient')}</div></div>
 <div class="g s"><button aria-label="Expand Object Snap"></button><input type="checkbox" id="os"><label for="os">Object Snap</label></div>
 <div class="g s"><button aria-label="Expand Soft Modification"></button><input type="checkbox" id="sm"><label for="sm">Soft Modification</label></div>
 <div class="g c"><button id="so" aria-label="Expand"></button><label for="so">Selection Options</label></div>
 <div class="g c"><button id="ni" aria-label="Expand"></button><label for="ni">Numerical Inputs</label></div>
 <footer><button>OK</button><button>Cancel</button></footer>`});

def('sf-viewcube',`:host{display:block;width:55px;height:56px}button{display:grid;place-items:center;width:100%;height:100%;background:#5d90c6;border:1px solid #6b9bcb;border-left:2px solid #74a4d4;box-shadow:0 4px 7px #003b7c}
 span{display:grid;place-items:center;width:33px;height:33px;margin-left:5px;background:#5587bd;font-size:12px;color:#2c5286}`,'<button><span>LEFT</span></button>');

def('sf-navbar',`:host{display:flex;gap:15px;justify-content:center;padding-right:6px;opacity:.75}button{display:flex;align-items:center;gap:3px}.a::after{content:"";border:2px solid transparent;border-top:3px solid #2d659c;border-bottom:0;width:5px}`,
 [['orbit',1],['look'],['pan'],['zoom'],['fit'],['layout'],['display',1],['grid',1]].map(([n,a])=>`<button class="${a?'a':''}" aria-label="${n}">${icon(n,30,32)}</button>`).join(''));

def('sf-viewport',`:host{display:grid;position:relative;flex:1;min-height:0;grid-template:1fr auto/334px 1fr 334px;border-bottom:2px solid #1a1a1a}
 sf-scene{position:absolute;inset:0}.l,.c,.r,sf-navbar,.q{position:relative}
 .l{padding:4px 0 0 4px}.c{display:flex;flex-direction:column;padding-top:4px}.r{display:flex;flex-direction:column;align-items:flex-end;padding-top:29px;gap:67px}
 sf-viewcube{margin-right:24px}sf-edit-form{margin-right:69px}
 .p{align-self:center;width:82px;height:24px;margin-bottom:1px;border:0;border-radius:0 0 8px 8px;background:linear-gradient(#c2c6cb,#d2d2d2);font:inherit;color:#444;padding:0;display:flex;align-items:center;justify-content:center;gap:2px}.p::after{content:"";border:3px solid transparent;border-top:5px solid #333;border-bottom:0}
 sf-navbar{grid-column:2;padding-bottom:6px}.q{display:flex;justify-content:flex-end;align-items:flex-end;padding:0 31px 3px 0}.q button{display:block}`,
 `<sf-scene></sf-scene><div class="l"><sf-browser></sf-browser></div><div class="c"><button class="p">Perspective</button><sf-ribbon></sf-ribbon></div><div class="r"><sf-viewcube></sf-viewcube><sf-edit-form></sf-edit-form></div><sf-navbar></sf-navbar><div class="q"><button aria-label="Support">${icon('chat',16)}</button></div>`);

def('sf-app',':host{display:flex;flex-direction:column;height:100vh;background:#004a95}','<sf-titlebar></sf-titlebar><sf-tabs></sf-tabs><sf-filebar></sf-filebar><sf-viewport></sf-viewport>');
</script>
</body>
</html>
